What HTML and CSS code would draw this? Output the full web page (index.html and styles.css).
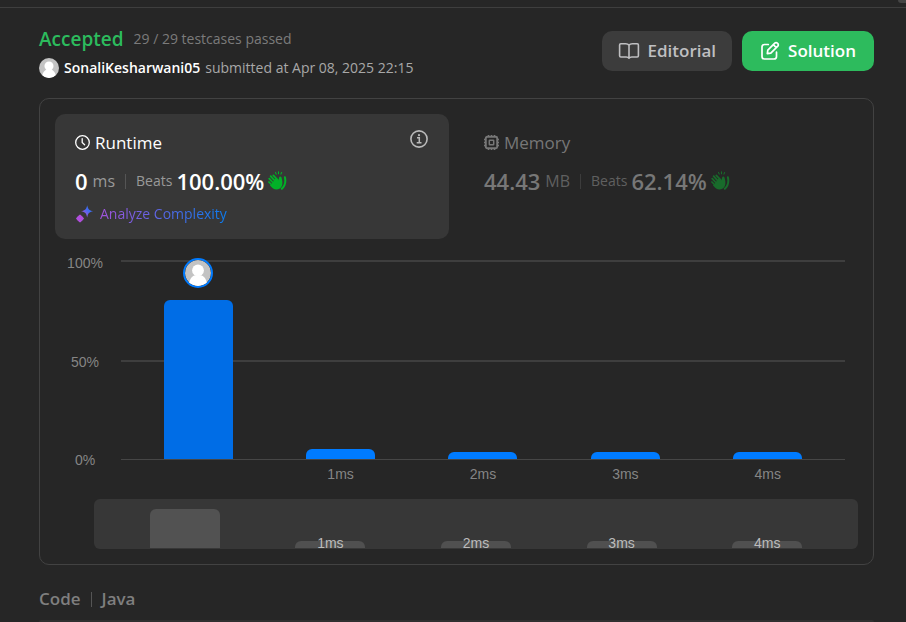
FILE: index.html
```html
<!DOCTYPE html>
<html lang="en">
<head>
<meta charset="utf-8">
<title>Submission result</title>
<link rel="stylesheet" href="styles.css">
</head>
<body>
<svg class="defs" aria-hidden="true">
  <defs>
    <linearGradient id="spark" x1="0" y1="1" x2="1" y2="0"><stop offset="0.15" stop-color="#b34fe0"/><stop offset="0.6" stop-color="#3f6cf0"/></linearGradient>
    <symbol id="avatar" viewBox="0 0 30 30">
      <clipPath id="round"><circle cx="15" cy="15" r="15"/></clipPath>
      <g clip-path="url(#round)"><rect width="30" height="30" fill="#c3c3c3"/><circle cx="15" cy="12" r="6.800" fill="#fff"/><path d="M4.500 30c0-7 3-11.500 7-12.500h7c4 1 7 5.500 7 12.500z" fill="#fff"/></g>
    </symbol>
    <symbol id="clap" viewBox="0 0 20 20">
      <g fill="none" stroke="currentColor" stroke-linecap="round">
        <path d="M2.200 7.700l4.600 4.800M3.600 5.200l5.200 5.600M6.300 4.300l4.800 5M1.900 11l4 4" stroke-width="1.700"/>
        <path d="M8.500 1.400l.7 1.700M11.500.8v1.900M14.600 1.500l-.7 1.600" stroke-width="1.100"/>
        <path d="M17.900 6.200c.9 4 .8 8-3.100 11.600" stroke-width="2"/>
      </g>
      <path d="M4.500 13l4-5.500 3 2.300c.5-1.200.3-2.500.6-3.400.5-1.300 2-1 2.400.2.700 2.500 1.300 5.200.6 7.600-1.400 4.300-6 5.500-9 3.300-1.200-.9-2.200-2-3.200-3.200z" fill="currentColor"/>
    </symbol>
  </defs>
</svg>
<div class="tabbar"><span class="scroll-thumb"></span></div>
<main class="page">
  <header class="head">
    <div class="summary">
      <div class="status"><h1>Accepted</h1><span>29 / 29 testcases passed</span></div>
      <div class="author"><svg class="avatar"><use href="#avatar"/></svg><a href="#">SonaliKesharwani05</a><span>submitted at Apr 08, 2025 22:15</span></div>
    </div>
    <div class="actions">
      <button type="button" class="btn">
        <svg width="22" height="20" viewBox="0 0 22 20" fill="none" stroke="currentColor" stroke-width="1.600" stroke-linejoin="round" stroke-linecap="round"><path d="M11 4.200C10.200 3.100 9 2.800 7.600 2.800H2.800c-.8 0-1.200.4-1.200 1.200v10.800c0 .8.400 1.200 1.200 1.200h5.400c1.300 0 2.200.4 2.800 1.200.6-.8 1.500-1.200 2.800-1.200h5.400c.8 0 1.200-.4 1.200-1.200V4c0-.8-.4-1.200-1.200-1.200h-4.800c-1.400 0-2.600.3-3.400 1.400zM11 4.200v12.600"/></svg>
        Editorial</button>
      <button type="button" class="btn primary">
        <svg width="20" height="20" viewBox="0 0 20 20" fill="none" stroke="currentColor" stroke-width="1.700" stroke-linejoin="round" stroke-linecap="round"><path d="M8.300 3.500H4.500c-1.400 0-2.500 1.100-2.500 2.500v9.500C2 16.900 3.100 18 4.500 18H14c1.400 0 2.500-1.100 2.500-2.500v-4.300"/><path d="M7.300 12.700l.5-3.500 7-7c.7-.7 1.800-.7 2.500 0l.5.500c.7.700.7 1.800 0 2.500l-7 7zM13.500 3.800l2.800 2.800"/></svg>
        Solution</button>
    </div>
  </header>

  <section class="card">
    <div class="metrics">
      <div class="metric selected">
        <h2><svg width="16" height="16" viewBox="0 0 16 16" fill="none" stroke="currentColor" stroke-width="1.300" stroke-linecap="round" stroke-linejoin="round"><circle cx="7.500" cy="7.500" r="6.800"/><path d="M7.200 3.600v4l2.400 2.200"/></svg>Runtime</h2>
        <div class="values"><strong>0</strong><span class="unit">ms</span><i class="rule"></i><span class="beats">Beats</span><strong>100.00%</strong><svg class="clap"><use href="#clap"/></svg></div>
        <a class="analyze" href="#"><svg width="19" height="18" viewBox="0 0 19 18" fill="url(#spark)"><path d="M12.200.3c1 4.200 1.800 5 6 6-4.200 1-5 1.800-6 6.200-1-4.400-1.800-5.200-6.200-6.200 4.400-1 5.200-1.800 6.200-6z"/><path d="M5 9.500c.5 0 4 3.500 4 4s-3.500 4-4 4-4-3.500-4-4 3.500-4 4-4z" fill="#b04fdd"/></svg><span>Analyze Complexity</span></a>
        <button type="button" class="info" aria-label="About runtime"><svg width="18" height="18" viewBox="0 0 18 18" fill="none" stroke="currentColor" stroke-width="1.600"><circle cx="9" cy="9" r="8.100"/><path d="M7 7.800h2.300v4.700M6.700 12.700h4.800" stroke-width="1.500"/><circle cx="9" cy="5.200" r="1.100" fill="currentColor" stroke="none"/></svg></button>
      </div>
      <div class="metric muted">
        <h2><svg width="16" height="16" viewBox="0 0 16 16" fill="none" stroke="currentColor"><rect x="1.800" y="1.800" width="11.400" height="11.400" rx="1.500" stroke-width="1.900"/><rect x="5.300" y="5.300" width="4.400" height="4.400" rx=".5" stroke-width="1.500"/><path d="M4.500 0v2M7.500 0v2M10.500 0v2M4.500 13v2M7.500 13v2M10.500 13v2M0 4.500h2M0 7.500h2M0 10.500h2M13 4.500h2M13 7.500h2M13 10.500h2" stroke-width="1.400"/></svg>Memory</h2>
        <div class="values"><strong>44.43</strong><span class="unit">MB</span><i class="rule"></i><span class="beats">Beats</span><strong>62.14%</strong><svg class="clap"><use href="#clap"/></svg></div>
      </div>
    </div>

    <div class="chart">
      <div class="scale"><span>100%</span><span>50%</span><span>0%</span></div>
      <div class="area">
        <div class="plot">
          <div class="col"><svg class="marker"><use href="#avatar"/></svg><div class="bar current" style="height:80%"></div></div>
          <div class="col"><div class="bar" style="height:5%"></div></div>
          <div class="col"><div class="bar" style="height:3.5%"></div></div>
          <div class="col"><div class="bar" style="height:3.5%"></div></div>
          <div class="col"><div class="bar" style="height:3.5%"></div></div>
        </div>
        <div class="ticks"><span></span><span>1ms</span><span>2ms</span><span>3ms</span><span>4ms</span></div>
      </div>
    </div>

    <div class="overview">
      <div class="mini tall"></div>
      <div class="mini"><span>1ms</span></div>
      <div class="mini"><span>2ms</span></div>
      <div class="mini"><span>3ms</span></div>
      <div class="mini"><span>4ms</span></div>
    </div>
  </section>

  <div class="code-head"><span>Code</span><i class="rule"></i><span>Java</span></div>
  <div class="code"></div>
</main>
</body>
</html>
```
FILE: styles.css
```css
* { box-sizing: border-box; }
html { background: #262626; }
body { display: flex; flex-direction: column; min-height: 100vh; margin: 0; color: #fff; font: 14px/20px "Open Sans", "Noto Sans", sans-serif; }
h1, h2 { margin: 0; }
a { color: inherit; text-decoration: none; }
button { font: inherit; border: 0; cursor: pointer; }
svg { display: block; flex: none; }
.defs { position: absolute; width: 0; height: 0; }

.tabbar { height: 8px; border-bottom: 1px solid #3e3e3e; display: flex; justify-content: flex-end; align-items: flex-start; }
.scroll-thumb { width: 8px; height: 3px; background: #454545; border-bottom-left-radius: 4px; }
.page { flex: 1; display: flex; flex-direction: column; padding: 20px 32px 0 39px; }

.head { display: flex; justify-content: space-between; align-items: flex-start; height: 70px; }
.status { display: flex; align-items: center; gap: 10px; height: 22px; color: #7b7b7b; }
.status h1 { font-size: 19px; font-weight: 600; color: #2cbb5d; }
.author { display: flex; align-items: center; gap: 5px; height: 20px; margin-top: 8px; color: #a8a8a8; }
.author a { color: #fff; font-weight: 600; }
.avatar { width: 20px; height: 20px; }
.actions { display: flex; gap: 10px; padding-top: 3px; }
.btn { display: flex; align-items: center; gap: 8px; height: 40px; padding: 0 16px; border-radius: 10px; background: #3c3c3c; color: #bfbfc1; font-size: 17px; font-weight: 600; }
.btn.primary { padding: 0 18px; background: #2dbb5d; color: #fff; }

.card { border: 1px solid #424242; border-radius: 10px; padding: 15px; }
.metrics { display: grid; grid-template-columns: 1fr 1fr; gap: 15px; }
.metric { position: relative; height: 125px; padding: 18px 20px; border-radius: 10px; }
.selected { background: #373737; }
.metric h2 { display: flex; align-items: center; gap: 4px; height: 22px; font-size: 17px; font-weight: 400; }
.values { display: flex; align-items: center; height: 30px; margin-top: 12px; color: #999; }
.values strong { color: #fff; font-size: 22px; font-weight: 600; }
.unit { margin-left: 5px; font-size: 16px; }
.rule { width: 1px; height: 15px; background: #555; }
.values .rule { margin: 0 10px; }
.beats { margin-right: 4px; }
.clap { width: 20px; height: 20px; margin-left: 3px; color: #02b128; }
.analyze { display: flex; align-items: center; gap: 6px; height: 20px; margin-top: 8px; }
.analyze span { background: linear-gradient(90deg, #a253dc, #0a7cf0); background-clip: text; -webkit-background-clip: text; color: transparent; }
.info { position: absolute; top: 16px; right: 21px; padding: 0; background: none; color: #bababa; }
.muted h2, .muted .values strong { color: #777; }
.muted .values { color: #606060; }
.muted .rule { background: #3c3c3c; }
.muted h2 { font-weight: 500; }
.muted .clap { color: #186b2b; }

.chart { display: flex; margin-top: 21px; font: 14px/16px "Liberation Sans", Arial, sans-serif; color: #858585; }
.scale { display: flex; flex-direction: column; justify-content: space-between; width: 60px; height: 213px; margin: -5px 6px 0 0; text-align: center; }
.area { flex: 1; margin-right: 13px; }
.plot { display: grid; grid-template-columns: repeat(5, 1fr); height: 200px; padding: 0 6px; border-bottom: 1px solid #464646; background: linear-gradient(#3e3e3e, #3e3e3e) 0 0 / 100% 2px no-repeat, linear-gradient(#3e3e3e, #3e3e3e) 0 100px / 100% 2px no-repeat; }
.col { display: flex; flex-direction: column; justify-content: flex-end; align-items: center; }
.bar { flex: none; width: 69px; border-radius: 6px 6px 0 0; background: #007bff; }
.current { background: #006de6; }
.marker { width: 30px; height: 30px; margin-bottom: 12px; border: 2px solid #007bff; border-radius: 50%; }
.ticks { display: grid; grid-template-columns: repeat(5, 1fr); padding: 6px 6px 0; text-align: center; }

.overview { display: grid; grid-template-columns: repeat(5, 1fr); align-items: end; justify-items: center; height: 50px; margin: 17px 0 0 39px; padding: 0 18px 1px; border-radius: 6px; background: #373737; font: 14px/10px "Liberation Sans", Arial, sans-serif; color: #bcbcbc; }
.mini { display: flex; justify-content: center; align-items: flex-end; width: 70px; height: 7px; border-radius: 6px 6px 0 0; background: #505050; }
.tall { height: 39px; background: #525252; }

.code-head { display: flex; align-items: center; gap: 10px; height: 22px; margin-top: 23px; color: #7f7f7f; font-size: 17px; font-weight: 600; }
.code { flex: 1; margin-top: 10px; border-radius: 8px 8px 0 0; background: #303030; }
```
